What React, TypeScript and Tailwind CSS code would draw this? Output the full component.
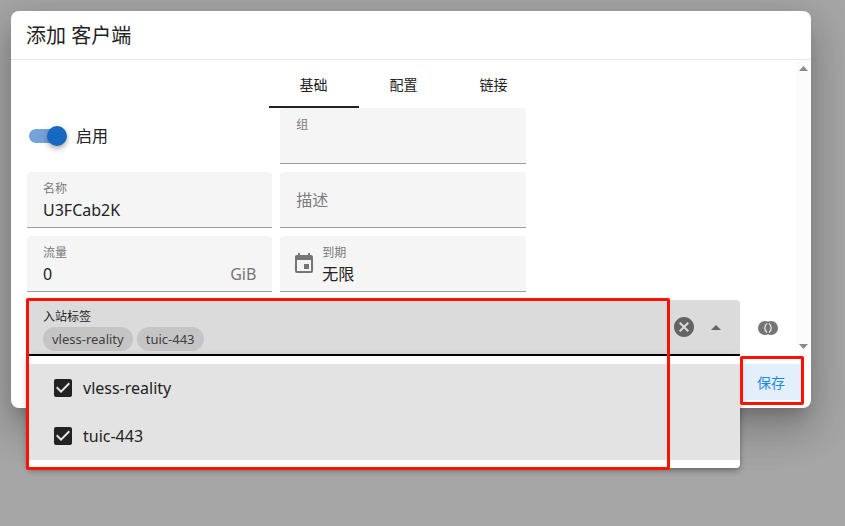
import { useState } from 'react';
import type { ReactNode } from 'react';

const icons = {
  calendar: 'M19,19H5V8H19M16,1V3H8V1H6V3H5C3.89,3 3,3.89 3,5V19A2,2 0 0,0 5,21H19A2,2 0 0,0 21,19V5C21,3.89 20.1,3 19,3H18V1M17,12H12V17H17V12Z',
  closeCircle: 'M12,2C17.53,2 22,6.47 22,12C22,17.53 17.53,22 12,22C6.47,22 2,17.53 2,12C2,6.47 6.47,2 12,2M15.59,7L12,10.59L8.41,7L7,8.41L10.59,12L7,15.59L8.41,17L12,13.41L15.59,17L17,15.59L13.41,12L17,8.41L15.59,7Z',
  checkbox: 'M10,17L5,12L6.41,10.58L10,14.17L17.59,6.58L19,8M19,3H5C3.89,3 3,3.89 3,5V19A2,2 0 0,0 5,21H19A2,2 0 0,0 21,19V5C21,3.89 20.1,3 19,3Z',
  checkboxBlank: 'M19,3H5C3.89,3 3,3.89 3,5V19A2,2 0 0,0 5,21H19A2,2 0 0,0 21,19V5C21,3.89 20.1,3 19,3M19,5V19H5V5H19Z',
  menuUp: 'M7,15L12,10L17,15H7Z',
};

const tabs = ['基础', '配置', '链接'];
const inboundTags = ['vless-reality', 'tuic-443'];

const Icon = ({ path, className = '' }: { path: string; className?: string }) => (
  <svg viewBox="0 0 24 24" className={`w-6 h-6 shrink-0 fill-current ${className}`} aria-hidden="true">
    <path d={path} />
  </svg>
);

const SetAllIcon = () => (
  <svg viewBox="0 0 24 24" className="w-6 h-6" aria-hidden="true">
    <circle cx="9" cy="12" r="7" fill="#757575" />
    <circle cx="15" cy="12" r="7" fill="#757575" />
    <path d="M11,7.4C8,9.7 8,14.3 11,16.6M13,7.4C16,9.7 16,14.3 13,16.6" fill="none" stroke="#e8e8e8" strokeWidth="1.3" />
  </svg>
);

interface FieldProps {
  id: string;
  label: string;
  value?: string;
  prepend?: ReactNode;
  suffix?: string;
}

const Field = ({ id, label, value = '', prepend, suffix }: FieldProps) => (
  <div className={`flex h-14 items-center gap-1.5 rounded-t bg-[#f5f5f5] border-b border-[#9c9c9c] pr-4 ${prepend ? 'pl-3' : 'pl-4'}`}>
    {prepend}
    <div className="flex-1 min-w-0">
      <label htmlFor={id} className="block text-xs leading-3 text-[#7b7b7b] mt-1.5">{label}</label>
      <div className="flex mt-[3px]">
        <input id={id} defaultValue={value} className="flex-1 min-w-0 h-6 bg-transparent text-base text-[#222] outline-none" />
        {suffix && <span className="text-base leading-6 text-[#757575]">{suffix}</span>}
      </div>
    </div>
  </div>
);

const ScrollRail = () => (
  <div className="w-[15px] shrink-0 bg-[#fcfcfc] flex flex-col items-center justify-between pt-1.5 pb-[7px]">
    <svg viewBox="0 0 9 5" className="w-[9px] h-[5px] fill-[#8b8b8b]"><path d="M0,5L4.5,0L9,5Z" /></svg>
    <svg viewBox="0 0 9 5" className="w-[9px] h-[5px] fill-[#8b8b8b]"><path d="M0,0L4.5,5L9,0Z" /></svg>
  </div>
);

export default function App() {
  const [activeTab, setActiveTab] = useState('基础');
  const [selected, setSelected] = useState(inboundTags);

  const toggleTag = (tag: string) =>
    setSelected((prev) => (prev.includes(tag) ? prev.filter((t) => t !== tag) : [...prev, tag]));

  return (
    <div className="min-h-screen bg-[#a6a6a6] pt-[11px] pl-[11px] pr-[34px] text-[#222] font-['Noto_Sans','Noto_Sans_CJK_SC',sans-serif]">
      <div
        role="dialog"
        aria-labelledby="dialog-title"
        className="rounded-lg bg-white shadow-[0_11px_15px_-7px_rgba(0,0,0,0.2),0_24px_38px_3px_rgba(0,0,0,0.14),0_9px_46px_8px_rgba(0,0,0,0.12)]"
      >
        <h1 id="dialog-title" className="h-[49px] px-[15px] text-xl leading-[50px] border-b border-[#e8e8e8]">添加 客户端</h1>

        <div className="flex">
          <div className="flex-1 min-w-0 px-4">
            {/* Tabs */}
            <div role="tablist" className="flex justify-center">
              {tabs.map((tab) => (
                <button
                  key={tab}
                  role="tab"
                  aria-selected={tab === activeTab}
                  onClick={() => setActiveTab(tab)}
                  className={`w-[90px] h-12 pt-1 text-sm border-b-2 ${tab === activeTab ? 'border-[#222]' : 'border-transparent'}`}
                >
                  {tab}
                </button>
              ))}
            </div>

            <div className="grid grid-cols-3 gap-2 pr-px">
              <label className="flex items-center h-14 pl-0.5 gap-[9px] text-base">
                <span className="relative flex items-center w-[38px] h-5">
                  <input type="checkbox" defaultChecked className="peer appearance-none w-9 h-3.5 rounded-full bg-[#bdbdbd] checked:bg-[#74a3d9]" />
                  <span className="absolute left-0 peer-checked:left-[18px] w-5 h-5 rounded-full bg-white peer-checked:bg-[#1867c0] shadow-[0_2px_4px_-1px_rgba(0,0,0,0.2),0_4px_5px_rgba(0,0,0,0.14),0_1px_10px_rgba(0,0,0,0.12)]" />
                </span>
                启用
              </label>
              <Field id="group" label="组" />
              <div className="col-start-1">
                <Field id="name" label="名称" value="U3FCab2K" />
              </div>
              <div className="h-14 rounded-t bg-[#f5f5f5] border-b border-[#9c9c9c] px-4">
                <input aria-label="描述" placeholder="描述" className="w-full h-full bg-transparent text-base placeholder:text-[#7b7b7b] outline-none" />
              </div>
              <div className="col-start-1">
                <Field id="volume" label="流量" value="0" suffix="GiB" />
              </div>
              <Field id="expiry" label="到期" value="无限" prepend={<Icon path={icons.calendar} className="text-[#757575]" />} />
            </div>

            {/* Inbound tags */}
            <div className="flex items-center gap-4 mt-2">
              <div className="relative flex-1 min-w-0">
                <div className="flex items-center gap-2 h-14 rounded-t bg-[#dbdbdb] border-b-2 border-black pl-4 pr-3">
                  <div className="flex-1 min-w-0">
                    <div id="tags-label" className="text-xs leading-3 mt-[7px]">入站标签</div>
                    <div className="flex gap-1 mt-1 h-6">
                      {selected.map((tag) => (
                        <span key={tag} className="h-6 px-[9px] rounded-full bg-[#c5c5c5] text-[13px] leading-6 text-[#404040]">{tag}</span>
                      ))}
                    </div>
                  </div>
                  <button aria-label="清除" onClick={() => setSelected([])} className="text-[#646464]"><Icon path={icons.closeCircle} /></button>
                  <button aria-labelledby="tags-label" aria-expanded="true" className="text-[#646464]"><Icon path={icons.menuUp} /></button>
                </div>

                <div className="absolute z-10 top-full inset-x-0 py-2 bg-white rounded-b shadow-[0_2px_4px_-1px_rgba(0,0,0,0.2),0_4px_5px_rgba(0,0,0,0.14),0_1px_10px_rgba(0,0,0,0.12)]">
                  {inboundTags.map((tag) => (
                    <label key={tag} className="flex items-center gap-2 h-12 px-6 bg-[#e3e3e3] text-base">
                      <input type="checkbox" checked={selected.includes(tag)} onChange={() => toggleTag(tag)} className="sr-only" />
                      <Icon path={selected.includes(tag) ? icons.checkbox : icons.checkboxBlank} />
                      {tag}
                    </label>
                  ))}
                </div>

                <div className="absolute z-20 -left-px -top-0.5 right-[70px] h-[172px] border-3 border-[#ff1200] rounded-xs pointer-events-none" />
              </div>
              <button aria-label="全选"><SetAllIcon /></button>
            </div>
          </div>
          <ScrollRail />
        </div>

        <div className="flex justify-end p-2">
          <div className="relative">
            <button className="w-16 h-9 pt-0.5 rounded bg-[#e3effb] text-sm text-[#1e88e5]">保存</button>
            <div className="absolute z-20 left-px -right-px -top-2 -bottom-[5px] border-3 border-[#ff1200] rounded-xs pointer-events-none" />
          </div>
        </div>
      </div>
    </div>
  );
}
